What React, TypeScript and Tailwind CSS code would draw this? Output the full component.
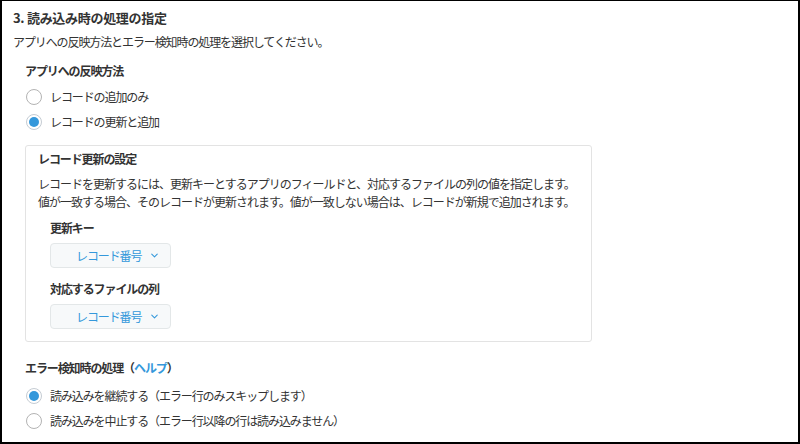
import { ChevronDown } from 'lucide-react';

function Radio({ label, checked }: { label: string; checked?: boolean }) {
  return (
    <div className="flex items-center h-[25px] gap-[8px]">
      <span
        className={
          'flex items-center justify-center w-[16px] h-[16px] rounded-full border bg-white ' +
          (checked ? 'border-[#c5ccd3]' : 'border-[#b3b3b3]')
        }
      >
        {checked && <span className="w-[10px] h-[10px] rounded-full bg-[#3498db]" />}
      </span>
      <span className="leading-[18px]">{label}</span>
    </div>
  );
}

function Select({ value }: { value: string }) {
  return (
    <div className="flex items-center w-[121px] h-[25px] pl-[25px] gap-[8px] rounded-[4px] border border-[#e3e7e8] bg-[#f7f9fa] text-[#3498db]">
      <span className="leading-[18px]">{value}</span>
      <ChevronDown size={11} strokeWidth={2.25} />
    </div>
  );
}

export default function App() {
  return (
    <div
      className="w-[800px] h-[444px] overflow-hidden bg-white border-t border-l-2 border-r-2 border-b-2 border-black text-[#333] text-[12px] tracking-[-1.1px]"
      style={{ fontFamily: '"Noto Sans CJK JP", "Noto Sans", sans-serif' }}
    >
      <div className="pl-[11px] pt-[7px]">
        <h1 className="text-[13px] font-bold leading-[20px] tracking-[-0.3px]">3. 読み込み時の処理の指定</h1>
        <p className="mt-[5px] leading-[18px]">アプリへの反映方法とエラー検知時の処理を選択してください。</p>
      </div>

      <div className="pl-[23px]">
        <h2 className="mt-[11px] font-bold leading-[18px]">アプリへの反映方法</h2>
        <div className="mt-[4px] pl-[1px]">
          <Radio label="レコードの追加のみ" />
          <Radio label="レコードの更新と追加" checked />
        </div>

        <div className="mt-[11px] w-[567px] rounded-[3px] border border-[#e3e3e3] pl-[12px] pt-[4px] pb-[12px]">
          <h3 className="font-bold leading-[18px]">レコード更新の設定</h3>
          <p className="mt-[7px] leading-[18px] tracking-[-1px]">
            レコードを更新するには、更新キーとするアプリのフィールドと、対応するファイルの列の値を指定します。
            <br />
            値が一致する場合、そのレコードが更新されます。値が一致しない場合は、レコードが新規で追加されます。
          </p>
          <div className="pl-[12px]">
            <h4 className="mt-[8px] font-bold leading-[18px]">更新キー</h4>
            <div className="mt-[6px]">
              <Select value="レコード番号" />
            </div>
            <h4 className="mt-[12px] font-bold leading-[18px]">対応するファイルの列</h4>
            <div className="mt-[6px]">
              <Select value="レコード番号" />
            </div>
          </div>
        </div>

        <h2 className="mt-[17px] font-bold leading-[18px]">
          エラー検知時の処理（<span className="text-[#3498db]">ヘルプ</span>）
        </h2>
        <div className="mt-[6px] pl-[1px]">
          <Radio label="読み込みを継続する（エラー行のみスキップします）" checked />
          <Radio label="読み込みを中止する（エラー行以降の行は読み込みません）" />
        </div>
      </div>
    </div>
  );
}
